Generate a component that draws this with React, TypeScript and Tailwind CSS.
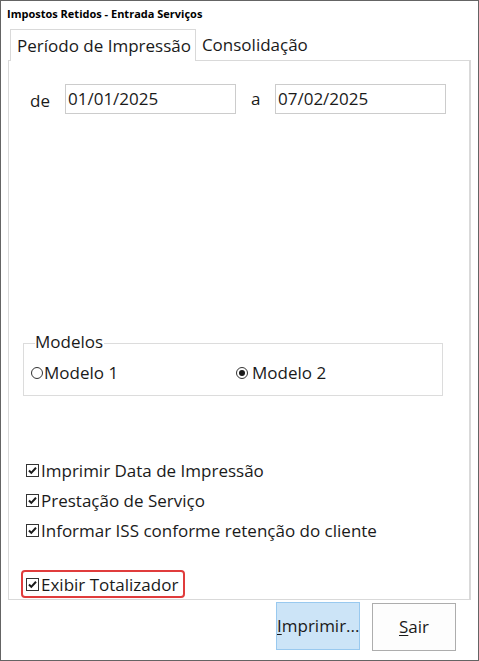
import React from 'react';

const font = { fontFamily: '"Open Sans", "Noto Sans", sans-serif' };

function CheckBox() {
  return (
    <span className="w-[13px] h-[13px] border border-[#333333] bg-white flex items-center justify-center shrink-0">
      <svg width="11" height="11" viewBox="0 0 11 11">
        <path d="M2 5.5l2.3 2.4L9 2.8" fill="none" stroke="#1a1a1a" strokeWidth="2" />
      </svg>
    </span>
  );
}

function Radio({ checked }: { checked?: boolean }) {
  return (
    <span className="w-[12px] h-[12px] rounded-full border border-[#333333] bg-white flex items-center justify-center shrink-0">
      {checked && <span className="w-[6px] h-[6px] rounded-full bg-[#1a1a1a]" />}
    </span>
  );
}

function CheckRow({ label }: { label: string }) {
  return (
    <div className="flex items-center h-[24px] gap-[2px]">
      <CheckBox />
      <span className="text-[17px] text-[#1a1a1a] leading-none">{label}</span>
    </div>
  );
}

export default function App() {
  return (
    <div style={font} className="w-[479px] h-[661px] border border-[#646464] bg-white flex flex-col">
      {/* Title */}
      <div className="h-[28px] pl-[6px] pt-[6px] text-[11px] font-bold text-black leading-[14px]">
        Impostos Retidos - Entrada Serviços
      </div>

      {/* Tabs */}
      <div className="flex items-end ml-[9px] h-[31px]">
        <div className="relative z-10 h-[32px] -mb-px bg-white border border-b-0 border-[#d9d9d9] pl-[6px] pr-[4px] flex items-center text-[17px] text-[#1a1a1a]">
          Período de Impressão
        </div>
        <div className="h-[31px] pl-[6px] flex items-center text-[17px] text-[#1a1a1a]">
          Consolidação
        </div>
      </div>

      {/* Tab panel */}
      <div className="ml-[7px] w-[463px] h-[540px] border border-r-2 border-[#d9d9d9] flex flex-col">
        {/* Dates */}
        <div className="flex items-center mt-[23px] pl-[21px]">
          <span className="w-[35px] pt-[4px] text-[17px] text-[#1a1a1a]">de</span>
          <div className="w-[171px] h-[30px] border border-[#cccccc] flex items-center pl-[2px] text-[17px] text-[#1a1a1a]">
            01/01/2025
          </div>
          <span className="ml-[15px] w-[24px] text-[17px] text-[#1a1a1a]">a</span>
          <div className="w-[171px] h-[30px] border border-[#cccccc] flex items-center pl-[2px] text-[17px] text-[#1a1a1a]">
            07/02/2025
          </div>
        </div>

        {/* Modelos group */}
        <div className="relative ml-[14px] mt-[229px] w-[420px] h-[53px] border border-[#dcdcdc]">
          <span className="absolute left-[11px] -top-[13px] bg-white pr-[1px] text-[17px] leading-[22px] text-[#1a1a1a]">
            Modelos
          </span>
          <div className="flex items-center mt-[20px] pl-[7px]">
            <div className="flex items-center gap-[1px] w-[205px]">
              <Radio />
              <span className="text-[17px] leading-none text-[#1a1a1a]">Modelo 1</span>
            </div>
            <div className="flex items-center gap-[4px]">
              <Radio checked />
              <span className="text-[17px] leading-none text-[#1a1a1a]">Modelo 2</span>
            </div>
          </div>
        </div>

        {/* Options */}
        <div className="flex flex-col ml-[17px] mt-[62px] gap-[6px]">
          <CheckRow label="Imprimir Data de Impressão" />
          <CheckRow label="Prestação de Serviço" />
          <CheckRow label="Informar ISS conforme retenção do cliente" />
        </div>

        <div className="ml-[12px] mt-[28px] w-[164px] h-[28px] border-2 border-[#e03c3c] rounded-[4px] flex items-center pl-[3px]">
          <CheckRow label="Exibir Totalizador" />
        </div>
      </div>

      {/* Buttons */}
      <div className="flex justify-end gap-[12px] pr-[22px] mt-[2px]">
        <button className="w-[84px] h-[48px] bg-[#cce4f7] border border-[#99c9ef] text-[17px] text-[#1a1a1a]">
          <span className="underline underline-offset-2">I</span>mprimir...
        </button>
        <button className="w-[84px] h-[48px] mt-[1px] bg-[#fdfdfd] border border-[#adadad] text-[17px] text-[#1a1a1a]">
          <span className="underline underline-offset-2">S</span>air
        </button>
      </div>
    </div>
  );
}
